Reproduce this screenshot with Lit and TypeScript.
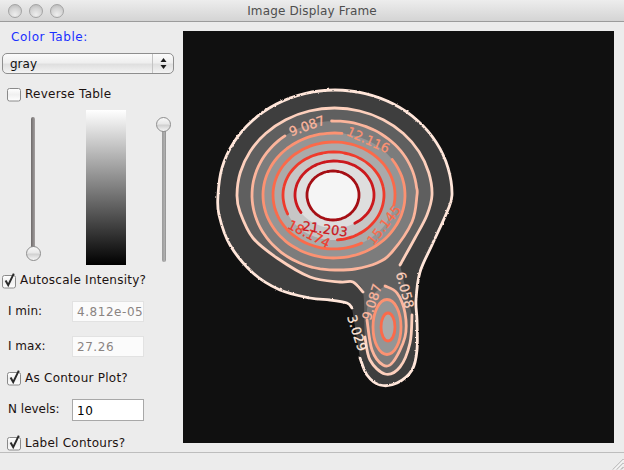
import { LitElement, html, css, svg } from "lit";
import { customElement } from "lit/decorators.js";

type P = [number, number];
interface Ring { cx: number; rx: number; top: number; bot: number; }
const MID = 195;

function arc(r: Ring, a0: number, a1: number, step = 6): P[] {
  const out: P[] = [];
  const n = Math.max(1, Math.round((a1 - a0) / step));
  for (let i = 0; i <= n; i++) {
    const t = ((a0 + ((a1 - a0) * i) / n) * Math.PI) / 180;
    const c = Math.cos(t);
    out.push([r.cx + r.rx * Math.sin(t), MID - (c >= 0 ? r.top : r.bot) * c]);
  }
  return out;
}

function spline(pts: P[]): string {
  let d = `M${pts[0][0].toFixed(1)},${pts[0][1].toFixed(1)}`;
  for (let i = 0; i < pts.length - 1; i++) {
    const p1 = pts[i], p2 = pts[i + 1];
    const p0 = pts[i - 1] || p1, p3 = pts[i + 2] || p2;
    const c1 = [p1[0] + (p2[0] - p0[0]) / 6, p1[1] + (p2[1] - p0[1]) / 6];
    const c2 = [p2[0] - (p3[0] - p1[0]) / 6, p2[1] - (p3[1] - p1[1]) / 6];
    d += `C${c1[0].toFixed(1)},${c1[1].toFixed(1)} ${c2[0].toFixed(1)},${c2[1].toFixed(1)} ${p2[0].toFixed(1)},${p2[1].toFixed(1)}`;
  }
  return d;
}

const REDS = ["#ffe6da", "#fdd0bd", "#fcb59c", "#fc9272", "#fb6a4a", "#ef3b2c", "#cb181d", "#a50f15"];
const GRAYS = ["#3e3e3e", "#5f5f5f", "#7c7c7c", "#959595", "#aaaaaa", "#c6c6c6", "#dedede", "#f5f5f5"];

const OUTER_R: Ring = { cx: 335, rx: 117, top: 105, bot: 105 };
const R2: Ring = { cx: 334.5, rx: 97.5, top: 87, bot: 87 };
const R3: Ring = { cx: 334.5, rx: 82.5, top: 74, bot: 75 };

const outerPts: P[] = [
  [360, 358], [367, 375], [380, 385], [397, 383], [412, 370], [417, 350], [417, 320], [416, 300],
  [420, 272], [432, 245], [447, 212],
  ...arc(OUTER_R, 90, -90, -15).map((p) => p),
  [219, 215], [230, 245], [253, 273], [280, 290], [310, 298], [330, 300], [347, 303], [352, 308],
];

const r2a: P[] = [
  [400, 265], [415, 238], [427, 215],
  ...arc(R2, 90, -90, -15),
  [240, 212], [253, 238], [277, 258], [310, 277], [340, 282], [353, 282], [363, 292],
];
const r2b: P[] = [[365, 337], [370, 360], [385, 374], [400, 367], [410, 343], [412, 315]];

const r3a: P[] = [
  ...arc(R3, -2, 90),
  [412, 222], [392, 252], [377, 263], [355, 269], [335, 270],
  ...arc(R3, 190, 323),
];
const r3fill: P[] = [...r3a, ...arc(R3, 323, 358)];

const blob3: P[] = [[385, 286], [397, 293], [405, 313], [405, 337], [393, 362], [383, 365], [372, 350], [367, 320]];
const blob3fill: P[] = [...blob3, [370, 298], [385, 286]];

const ELL: { r: Ring; from: number; to: number; lv: number }[] = [
  { r: { cx: 334, rx: 71, top: 62, bot: 63 }, from: 55, to: 366.5, lv: 3 },
  { r: { cx: 334, rx: 61, top: 53, bot: 54 }, from: 153, to: 460.7, lv: 4 },
  { r: { cx: 333.5, rx: 50.5, top: 43, bot: 45 }, from: 245, to: 535.6, lv: 5 },
  { r: { cx: 334.5, rx: 39.5, top: 34, bot: 33 }, from: 238, to: 509, lv: 6 },
  { r: { cx: 333, rx: 26, top: 24, bot: 25 }, from: 0, to: 360, lv: 7 },
];

const LABELS: { t: string; x: number; y: number; a: number; lv: number }[] = [
  { t: "3.029", x: 357, y: 333, a: 72, lv: 0 },
  { t: "6.058", x: 405, y: 290, a: 75, lv: 1 },
  { t: "9.087", x: 372, y: 302, a: -72, lv: 2 },
  { t: "9.087", x: 307, y: 126, a: -20, lv: 2 },
  { t: "12.116", x: 368, y: 140, a: 24, lv: 3 },
  { t: "15.145", x: 384, y: 225, a: -52, lv: 4 },
  { t: "18.174", x: 309, y: 234, a: 27, lv: 5 },
  { t: "21.203", x: 325, y: 229, a: 8, lv: 6 },
];

function plot() {
  return html`<svg class="plot" viewBox="183 31 431 412" width="431" height="412">
    <defs>
      <filter id="rough" x="-5%" y="-5%" width="110%" height="110%" color-interpolation-filters="sRGB">
        <feTurbulence type="fractalNoise" baseFrequency="0.4" numOctaves="1" seed="4" result="n"></feTurbulence>
        <feDisplacementMap in="SourceGraphic" in2="n" scale="2.4" xChannelSelector="R" yChannelSelector="G"></feDisplacementMap>
      </filter>
    </defs>
    <rect x="183" y="31" width="431" height="412" fill="#101010"></rect>
    <path d="${spline(outerPts)}Z" fill="${GRAYS[0]}"></path>
    <path d="${spline([...r2a, ...r2b])}Z" fill="${GRAYS[1]}"></path>
    <path d="${spline(r3fill)}Z" fill="${GRAYS[2]}"></path>
    <path d="${spline(blob3fill)}Z" fill="${GRAYS[2]}"></path>
    <ellipse cx="387" cy="327" rx="14" ry="27.5" fill="${GRAYS[3]}"></ellipse>
    <ellipse cx="388" cy="327" rx="7" ry="14" fill="${GRAYS[4]}"></ellipse>
    ${ELL.map((e) => svg`<path d="${spline(arc(e.r, 0, 360))}Z" fill="${GRAYS[e.lv]}"></path>`)}
    <g fill="none" stroke-width="2.8" stroke-linecap="round" stroke-linejoin="round">
      <path d="${spline(outerPts)}" stroke="${REDS[0]}" filter="url(#rough)"></path>
      <path d="${spline(r2a)}" stroke="${REDS[1]}"></path>
      <path d="${spline(r2b)}" stroke="${REDS[1]}"></path>
      <path d="${spline(r3a)}" stroke="${REDS[2]}"></path>
      <path d="${spline(blob3)}" stroke="${REDS[2]}"></path>
      <ellipse cx="387" cy="327" rx="14" ry="27.5" stroke="${REDS[3]}"></ellipse>
      <ellipse cx="388" cy="327" rx="7" ry="14" stroke="${REDS[4]}"></ellipse>
      ${ELL.map((e) => svg`<path d="${spline(arc(e.r, e.from, e.to))}" stroke="${REDS[e.lv]}"></path>`)}
    </g>
    ${LABELS.map(
      (l) => svg`<text class="clabel" x="${l.x}" y="${l.y}" text-anchor="middle" dominant-baseline="central"
        fill="${REDS[l.lv]}" stroke="${REDS[l.lv]}" transform="rotate(${l.a} ${l.x} ${l.y})">${l.t}</text>`
    )}
  </svg>`;
}

function box(checked: boolean) {
  return html`<svg class="cb" width="16" height="17" viewBox="0 0 16 17">
    <defs>
      <linearGradient id="cbg" x1="0" y1="0" x2="0" y2="1">
        <stop offset="0" stop-color="#ffffff"></stop>
        <stop offset="0.5" stop-color="#f0f0f0"></stop>
        <stop offset="1" stop-color="#ffffff"></stop>
      </linearGradient>
    </defs>
    <rect x="1.5" y="3.5" width="13" height="12.5" rx="2" fill="url(#cbg)" stroke="#8a8a8a"></rect>
    ${checked
      ? svg`<path d="M4.6 8.6 L7.2 13.2 L12.8 1.6" fill="none" stroke="#2a2a2a" stroke-width="2"></path>`
      : ""}
  </svg>`;
}

@customElement("app-root")
export class AppRoot extends LitElement {
  static styles = css`
    :host {
      display: block;
      width: 624px;
      height: 470px;
      overflow: hidden;
      background: #ececec;
      font-family: "DejaVu Sans", sans-serif;
      font-size: 12px;
      color: #1c1210;
    }
    .titlebar {
      height: 21px;
      border-bottom: 1px solid #9c9c9c;
      background: linear-gradient(#ededed, #d4d4d4);
      display: flex;
      align-items: center;
      position: relative;
    }
    .lights {
      display: flex;
      gap: 7px;
      padding-left: 8px;
    }
    .light {
      width: 12px;
      height: 12px;
      border-radius: 50%;
      border: 1px solid #a4a4a4;
      background: radial-gradient(circle at 50% 80%, #eeeeee, #d4d4d4 55%, #b4b4b4);
    }
    .wtitle {
      position: absolute;
      left: 0;
      right: 0;
      text-align: center;
      color: #4e4e4e;
      font-size: 12px;
      letter-spacing: 0.15px;
    }
    .body {
      display: flex;
      height: 430px;
      overflow: hidden;
    }
    .left {
      width: 183px;
      flex: none;
      display: flex;
      flex-direction: column;
    }
    .ctitle {
      height: 28px;
      line-height: 30px;
      padding-left: 11px;
      color: #1a30ff;
      letter-spacing: 0.55px;
    }
    .select {
      margin: 3px 0 0 2px;
      width: 172px;
      height: 21px;
      box-sizing: border-box;
      border: 1px solid #8e8e8e;
      border-radius: 5px;
      background: linear-gradient(#fbfbfb, #efefef 45%, #dfdfdf 55%, #f4f4f4);
      display: flex;
      align-items: center;
      justify-content: space-between;
    }
    .select span {
      padding-left: 7px;
      color: #111;
    }
    .stepper {
      width: 20px;
      height: 19px;
      border-left: 1px solid #c4c4c4;
      display: flex;
      justify-content: center;
      align-items: center;
    }
    .check {
      display: flex;
      align-items: center;
      height: 20px;
      gap: 3px;
      white-space: nowrap;
      letter-spacing: 0.25px;
    }
    .check.l8 {
      padding-left: 6px;
    }
    .check.l3 {
      padding-left: 1px;
    }
    .rev {
      margin-top: 10px;
    }
    .auto {
      margin-top: 6px;
    }
    .mt11 {
      margin-top: 11px;
    }
    .contour {
      margin-top: 11px;
    }
    .contour span {
      padding-top: 1px;
    }
    .labelc {
      margin-top: 12px;
    }
    .labelc span {
      padding-top: 1px;
    }
    .bars {
      margin-top: 6px;
      height: 155px;
      display: flex;
    }
    .slider {
      width: 16px;
      height: 155px;
      position: relative;
      flex: none;
    }
    .s1 {
      margin-left: 26px;
    }
    .s2 {
      margin-left: 30px;
    }
    .track {
      position: absolute;
      width: 4px;
      border-radius: 2px;
    }
    .s1 .track {
      left: 5px;
      top: 7px;
      height: 136px;
      background: linear-gradient(90deg, #6e6a6a, #a4a0a0);
    }
    .s2 .track {
      left: 5.5px;
      top: 14px;
      height: 138px;
      background: linear-gradient(90deg, #999, #b0b0b0 70%, #888);
    }
    .thumb {
      position: absolute;
      left: 0;
      width: 15px;
      height: 15px;
      box-sizing: border-box;
      border: 1px solid #8e8e8e;
      border-radius: 50%;
      background: linear-gradient(#f8f8f8, #e8e8e8 45%, #d0d0d0 55%, #f6f6f6);
    }
    .s1 .thumb {
      top: 136px;
    }
    .s2 .thumb {
      top: 7px;
    }
    .cbar {
      margin-left: 44px;
      width: 40px;
      height: 155px;
      flex: none;
      background: linear-gradient(#ffffff, #000000);
    }
    .field {
      display: flex;
      align-items: center;
      padding-left: 8px;
    }
    .field label {
      width: 64px;
      flex: none;
      position: relative;
      top: -1px;
    }
    .input {
      width: 72px;
      box-sizing: border-box;
      overflow: hidden;
      white-space: nowrap;
      padding-left: 4px;
      background: #fbfbfb;
      border: 1px solid #e2e2e2;
      color: #8a8482;
      height: 21px;
      line-height: 21px;
      letter-spacing: 0.55px;
    }
    .input.on {
      height: 22px;
      line-height: 22px;
      background: #fff;
      border: 1px solid #a8a8a8;
      color: #000;
    }
    .f1 {
      margin-top: 11px;
    }
    .f2 {
      margin-top: 14px;
    }
    .plot {
      display: block;
      flex: none;
      margin-top: 9px;
    }
    .clabel {
      font-family: "DejaVu Sans", sans-serif;
      font-size: 13px;
      stroke-width: 0.25px;
    }
    .status {
      height: 17px;
      border-top: 1px solid #bdbdbd;
      display: flex;
      justify-content: flex-end;
      align-items: flex-end;
    }
  `;

  render() {
    return html`
      <div class="titlebar">
        <div class="lights">
          <div class="light"></div>
          <div class="light"></div>
          <div class="light"></div>
        </div>
        <div class="wtitle">Image Display Frame</div>
      </div>
      <div class="body">
        <div class="left">
          <div class="ctitle">Color Table:</div>
          <div class="select">
            <span>gray</span>
            <div class="stepper">
              <svg width="7" height="13" viewBox="0 0 7 13">
                <path d="M3.5 1 L6.5 5 H0.5 Z M3.5 12 L6.5 8 H0.5 Z" fill="#1a1a1a"></path>
              </svg>
            </div>
          </div>
          <div class="check l8 rev">${box(false)}<span>Reverse Table</span></div>
          <div class="bars">
            <div class="slider s1"><div class="track"></div><div class="thumb"></div></div>
            <div class="cbar"></div>
            <div class="slider s2"><div class="track"></div><div class="thumb"></div></div>
          </div>
          <div class="check l3 auto">${box(true)}<span>Autoscale Intensity?</span></div>
          <div class="field f1"><label>I min:</label><div class="input">4.812e-05</div></div>
          <div class="field f2"><label>I max:</label><div class="input">27.26</div></div>
          <div class="check l8 contour">${box(true)}<span>As Contour Plot?</span></div>
          <div class="field mt11"><label>N levels:</label><div class="input on">10</div></div>
          <div class="check l8 labelc">${box(true)}<span>Label Contours?</span></div>
        </div>
        ${plot()}
      </div>
      <div class="status">
        <svg width="15" height="15" viewBox="0 0 15 15">
          <path d="M4 14.5 L14.5 4 M8 14.5 L14.5 8 M12 14.5 L14.5 12" stroke="#9a9a9a" fill="none"></path>
          <path d="M5 14.5 L14.5 5 M9 14.5 L14.5 9" stroke="#fff" fill="none"></path>
        </svg>
      </div>
    `;
  }
}
